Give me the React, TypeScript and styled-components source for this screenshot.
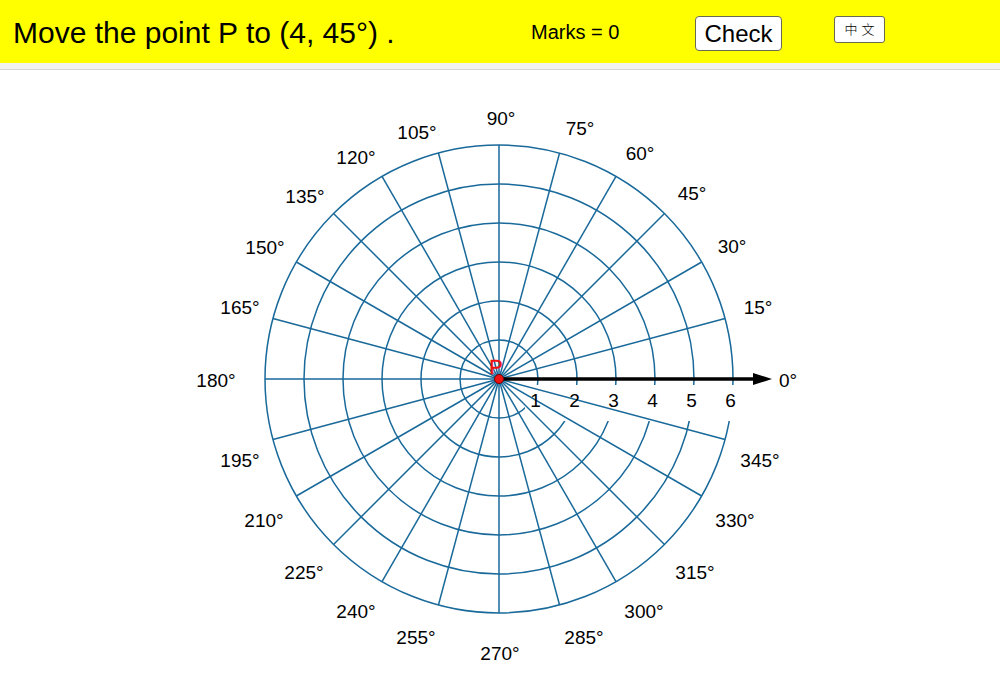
import React from "react";
import styled, { createGlobalStyle } from "styled-components";

const GlobalStyle = createGlobalStyle`
  html, body {
    margin: 0;
    padding: 0;
    background: #ffffff;
    overflow: hidden;
  }
  body {
    font-family: "Liberation Sans", Arial, sans-serif;
  }
`;

const Page = styled.div`
  display: flex;
  flex-direction: column;
  width: 1000px;
  height: 690px;
`;

const TopBar = styled.header`
  display: grid;
  grid-template-columns: 518px 164px 139px auto;
  align-items: center;
  height: 63px;
  box-sizing: border-box;
  padding: 2px 0 0 13px;
  background: #ffff00;
`;

const Prompt = styled.h1`
  margin: 0;
  font-size: 30px;
  font-weight: normal;
  color: #000;
  white-space: nowrap;
`;

const Score = styled.span`
  font-size: 20px;
  color: #000;
  white-space: nowrap;
`;

const CheckButton = styled.button`
  justify-self: start;
  margin-top: 2px;
  width: 87px;
  height: 35px;
  padding: 0;
  border: 1px solid #6a6a50;
  border-radius: 4px;
  background: #ffffff;
  font-family: "Liberation Sans", Arial, sans-serif;
  font-size: 24px;
  color: #000;
  cursor: pointer;
`;

const LangButton = styled.button`
  justify-self: start;
  align-self: start;
  margin-top: 14px;
  width: 51px;
  height: 27px;
  padding: 0 0 3px 4px;
  border: 1px solid #6a6a50;
  border-radius: 3px;
  background: #ffffff;
  font-family: "Noto Sans CJK TC", "Noto Sans CJK SC", sans-serif;
  font-size: 13px;
  letter-spacing: 4px;
  font-weight: 300;
  color: #000;
  cursor: pointer;
`;

const Shelf = styled.div`
  height: 6px;
  background: #f2f2f2;
  border-bottom: 1px solid #d6d6d6;
`;

const Board = styled.svg`
  display: block;
  width: 1000px;
  height: 620px;
  font-family: "Liberation Sans", Arial, sans-serif;
`;

const CX = 499;
const CY = 379;
const STEP = 39;
const RINGS = 6;
const OUTER = STEP * RINGS;
const GRID = "#19699a";
const POINT = "#ee1111";

// angle label centres around the dial
const angleLabels: [number, number, number][] = [
  [0, 788, 380],
  [15, 758, 307],
  [30, 732, 246],
  [45, 692, 193],
  [60, 640, 153],
  [75, 580, 128],
  [90, 501, 118],
  [105, 417, 132],
  [120, 356, 157],
  [135, 305, 196],
  [150, 265, 247],
  [165, 240, 307],
  [180, 216, 380],
  [195, 240, 460],
  [210, 264, 520],
  [225, 304, 572],
  [240, 356, 611],
  [255, 416, 637],
  [270, 500, 653],
  [285, 584, 637],
  [300, 644, 611],
  [315, 695, 572],
  [330, 735, 520],
  [345, 760, 460],
];

function PolarGrid() {
  const rings = Array.from({ length: RINGS }, (_, i) => (i + 1) * STEP);
  const spokes = Array.from({ length: 24 }, (_, i) => i * 15);
  return (
    <Board viewBox="0 70 1000 620">
      {rings.map((r) => (
        <circle key={r} cx={CX} cy={CY} r={r} fill="none" stroke={GRID} strokeWidth={1.5} />
      ))}
      {/* clear the ring arcs behind the radius numbers */}
      {rings.map((r) => (
        <rect key={`m${r}`} x={CX + r - 13} y={385} width={24} height={36} fill="#fff" />
      ))}
      {spokes.map((a) => {
        const t = (a * Math.PI) / 180;
        return (
          <line
            key={a}
            x1={CX}
            y1={CY}
            x2={CX + OUTER * Math.cos(t)}
            y2={CY - OUTER * Math.sin(t)}
            stroke={GRID}
            strokeWidth={1.5}
          />
        );
      })}
      <line x1={CX} y1={CY} x2={756} y2={CY} stroke="#000" strokeWidth={3.5} />
      <polygon points={`753,${CY - 6} 772,${CY} 753,${CY + 6}`} fill="#000" />
      {rings.map((r, i) => (
        <text key={`n${r}`} x={CX + r - 2.5} y={407} fontSize={19} textAnchor="middle" fill="#000">
          {i + 1}
        </text>
      ))}
      {angleLabels.map(([a, x, y]) => (
        <text key={`a${a}`} x={x} y={y + 7} fontSize={19} textAnchor="middle" fill="#000">
          {a}°
        </text>
      ))}
      <text
        x={496}
        y={374}
        fontSize={20}
        textAnchor="middle"
        fill={POINT}
        stroke={POINT}
        strokeWidth={0.5}
      >
        P
      </text>
      <circle cx={CX} cy={CY} r={4.5} fill={POINT} stroke="#7a0000" strokeWidth={1} />
    </Board>
  );
}

export default function App() {
  return (
    <Page>
      <GlobalStyle />
      <TopBar>
        <Prompt>Move the point P to (4, 45°) .</Prompt>
        <Score>Marks = 0</Score>
        <CheckButton>Check</CheckButton>
        <LangButton>中文</LangButton>
      </TopBar>
      <Shelf />
      <PolarGrid />
    </Page>
  );
}
